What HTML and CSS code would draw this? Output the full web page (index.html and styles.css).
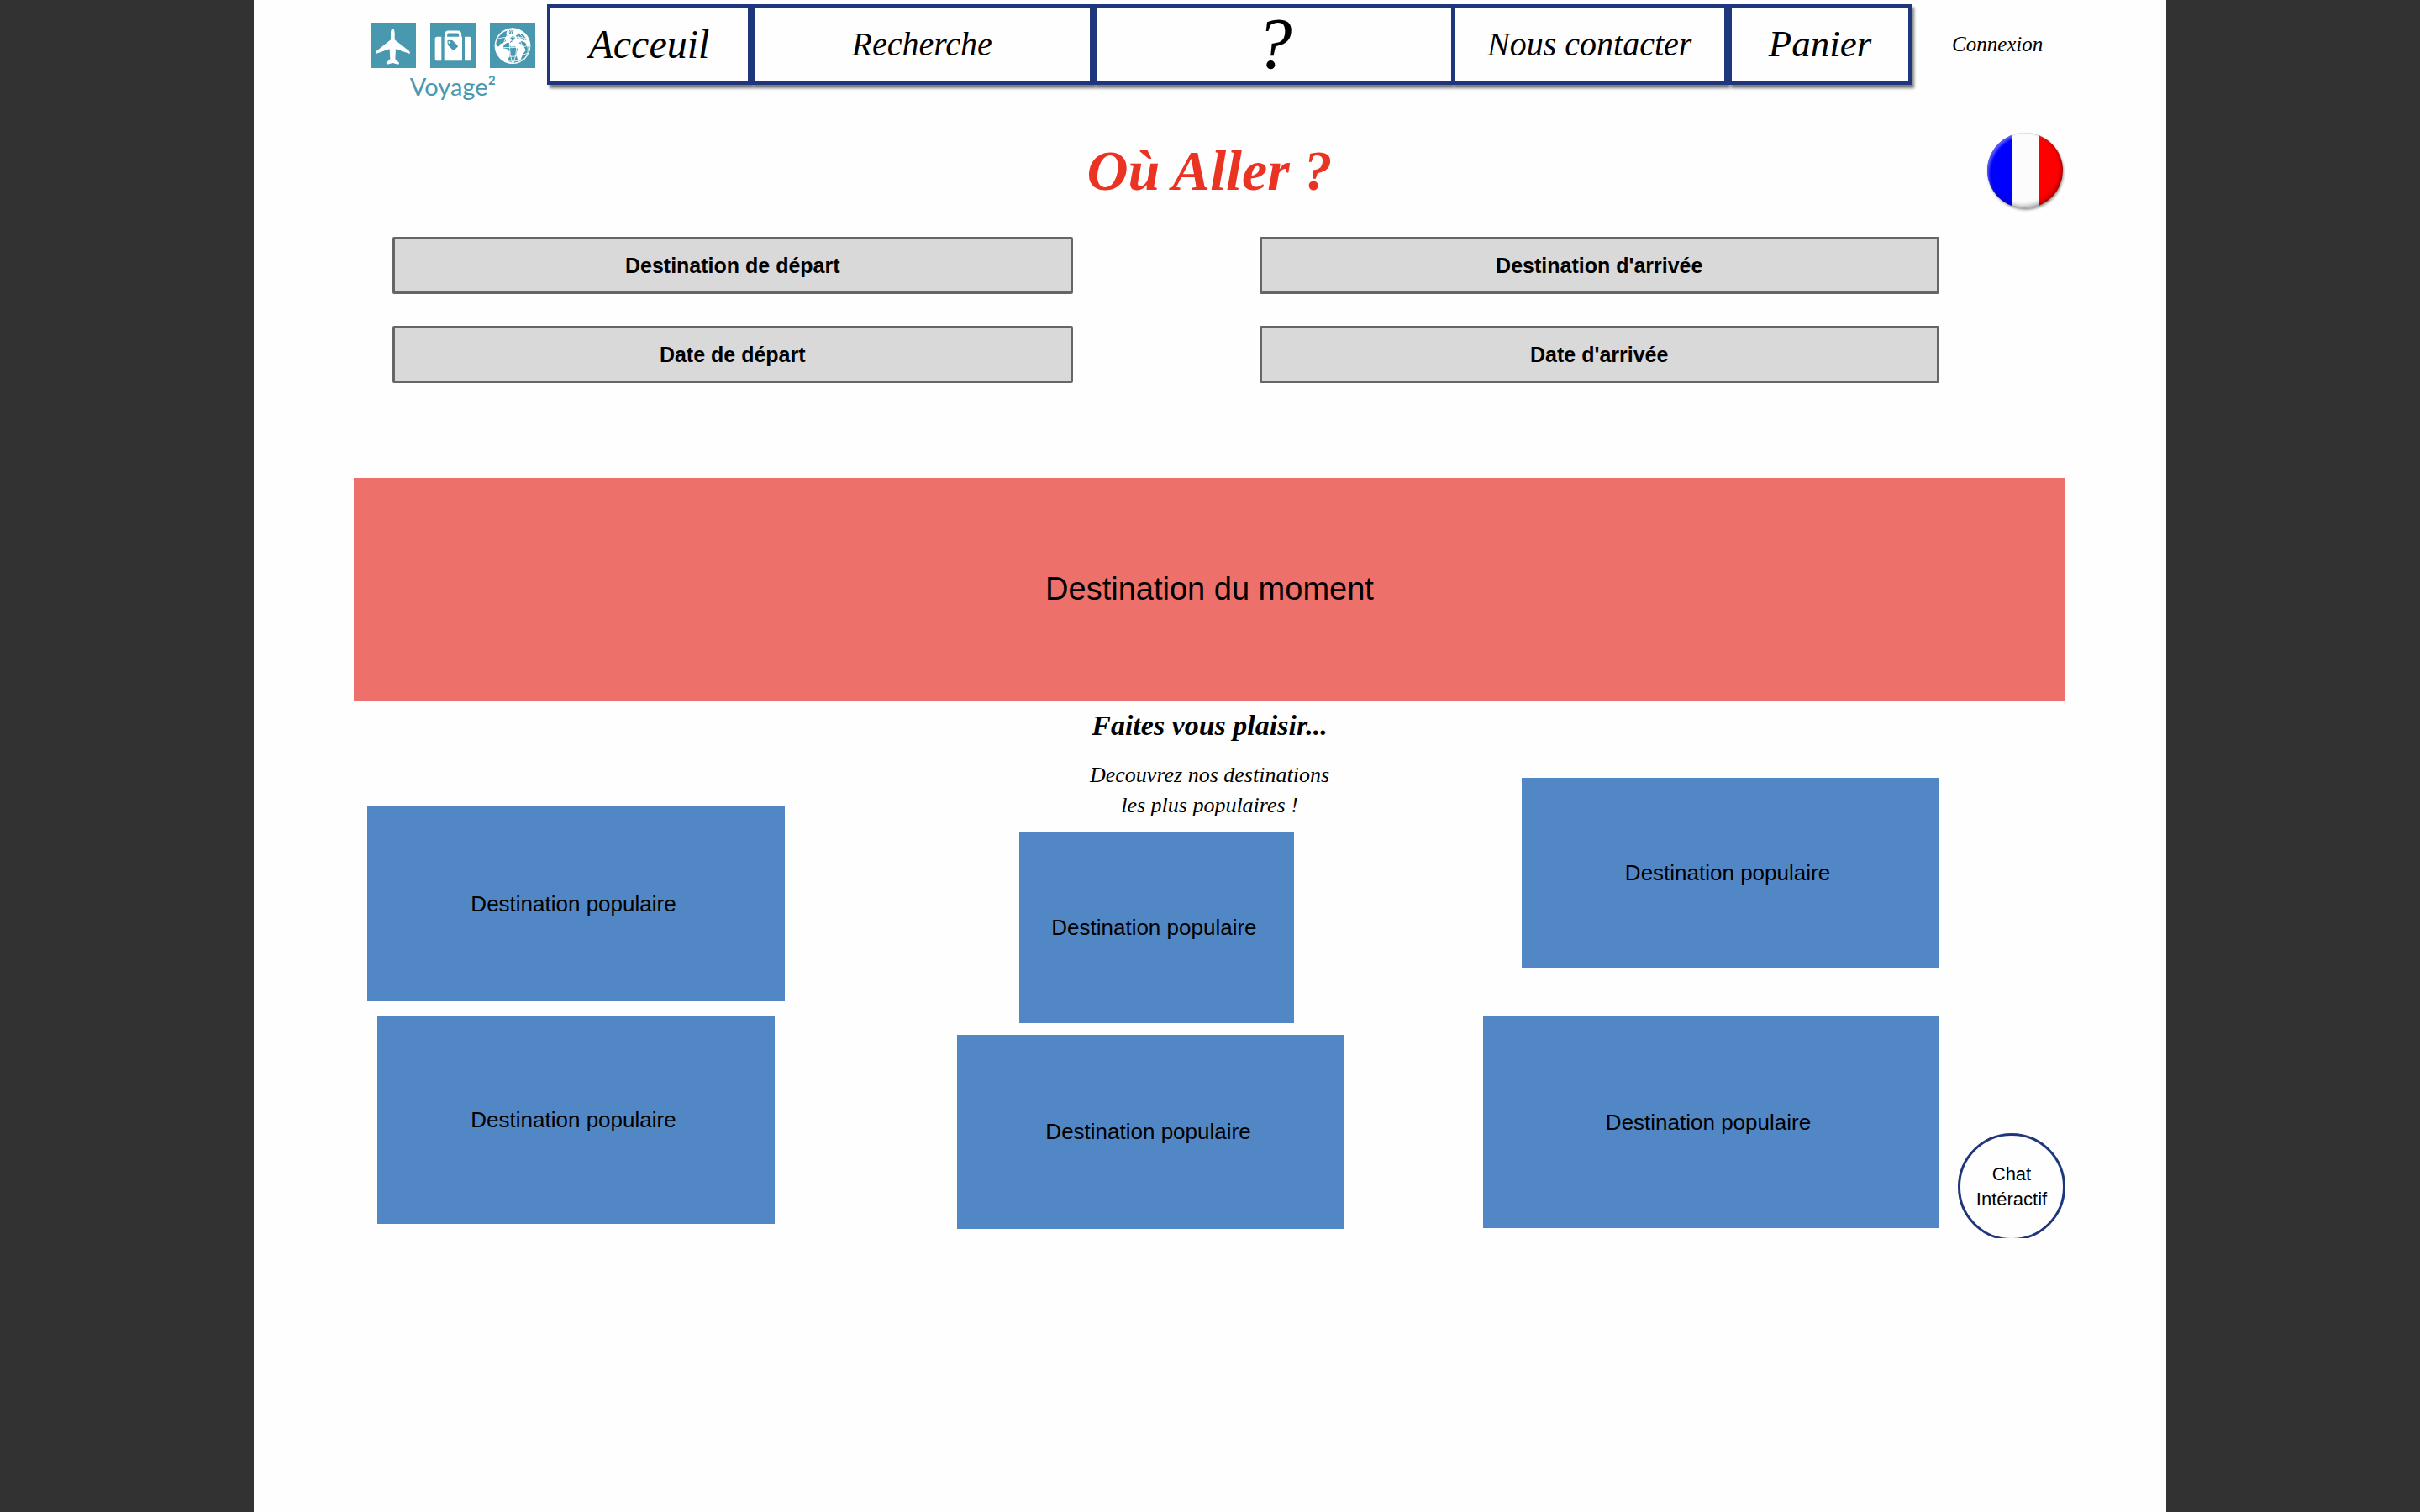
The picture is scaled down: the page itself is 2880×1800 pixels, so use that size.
FILE: index.html
```html
<!DOCTYPE html>
<html lang="fr">
<head>
  <meta charset="utf-8">
  <meta name="viewport" content="width=device-width, initial-scale=1">
  <title>Voyage²</title>
  <link rel="stylesheet" href="styles.css">
</head>
<body>
  <div class="page">
    <header class="header">
      <a class="logo" href="#">
        <span class="logo-icons">
          <svg class="logo-icon" viewBox="0 0 162 162" aria-hidden="true">
            <rect width="162" height="162" fill="#4899af"/>
            <path fill="#fff" d="M79 22c5 0 7 8 7 16v23l50 39c4 3 5 6 4 11L90 94l-2 36 12 11c3 3 2 7-1 8l-20-5-20 5c-3-1-4-5-1-8l12-11-2-36-49 17c-1-5 0-8 4-11l49-39V38c0-8 2-16 7-16z"/>
          </svg>
          <svg class="logo-icon" viewBox="0 0 162 162" aria-hidden="true">
            <rect width="162" height="162" fill="#4899af"/>
            <path fill="none" stroke="#fff" stroke-width="9" d="M56 52V42q0-9 9-9h33q9 0 9 9v10"/>
            <path fill="#fff" d="M25 50h15v86H25q-8 0-8-8V58q0-8 8-8zM50 50h64v86H50zM123 50h15q9 0 9 8v70q0 8-9 8h-15z"/>
            <path fill="#4899af" fill-rule="evenodd" d="M61 67q0-5 5-5l13 1 19 19q2 2 0 4L85 98q-2 2-4 0L63 80zm7-1a4 4 0 1 0 1 8 4 4 0 0 0-1-8z"/>
          </svg>
          <svg class="logo-icon" viewBox="0 0 162 162" aria-hidden="true">
            <rect width="162" height="162" fill="#4899af"/>
            <circle cx="81" cy="83" r="64" fill="#fff"/>
            <path fill="#4899af" d="M39 42l12-10 11-3-4 10 4 9-9 6 4 12-9 7-10 2-5 9-8 4-3-15q3-19 17-31zM69 27l17-2-3 13-9 5-6-5zM70 53l11-5 10 3-5 10-12 5-6 12 8 8 14-1 9 9-5 19 6 22 10-3 7-19 11-15-9-17-15-8 8-8 14 6 10 15 6-6q1 20-9 34-16 26-47 29-15 0-24-7l8-15 2-16-11-11-14-3 3-12 11-7 13-1 7-5z"/>
            <path fill="#4899af" d="M101 36l19 8 12 16-9 4-13-9-12 1-5-9z"/>
            <g fill="none" stroke="#fff" stroke-width="2.5">
              <path d="M81 19q-22 60 0 128M81 19q-54 58-28 122M81 19q28 62 2 128M81 19q56 60 22 124M81 19q84 62 40 114"/>
              <path d="M22 58q60-14 118 0M17 85q64 10 128-4M24 112q60 20 116-5M43 133q40 12 78-3"/>
            </g>
          </svg>
        </span>
        <span class="logo-name">Voyage²</span>
      </a>
      <nav class="nav" aria-label="Navigation principale">
        <a class="nav-link nav-home" href="#">Acceuil</a>
        <a class="nav-link nav-search" href="#">Recherche</a>
        <a class="nav-link nav-help" href="#">?</a>
        <a class="nav-link nav-contact" href="#">Nous contacter</a>
        <a class="nav-link nav-cart" href="#">Panier</a>
      </nav>
      <a class="login" href="#">Connexion</a>
    </header>

    <main>
      <div class="title-row">
        <h1 class="title">Où Aller ?</h1>
        <button class="flag" type="button" aria-label="Français"></button>
      </div>

      <form class="search">
        <input class="field" type="text" placeholder="Destination de départ" aria-label="Destination de départ">
        <input class="field" type="text" placeholder="Destination d'arrivée" aria-label="Destination d'arrivée">
        <input class="field" type="text" placeholder="Date de départ" aria-label="Date de départ">
        <input class="field" type="text" placeholder="Date d'arrivée" aria-label="Date d'arrivée">
      </form>

      <a class="banner" href="#">Destination du moment</a>

      <section class="popular">
        <div class="intro">
          <h2 class="intro-title">Faites vous plaisir...</h2>
          <p class="intro-text">Decouvrez nos destinations<br>les plus populaires !</p>
        </div>
        <div class="column column-left">
          <a class="tile tile-a" href="#">Destination populaire</a>
          <a class="tile tile-b" href="#">Destination populaire</a>
        </div>
        <div class="column column-middle">
          <a class="tile tile-c" href="#">Destination populaire</a>
          <a class="tile tile-d" href="#">Destination populaire</a>
        </div>
        <div class="column column-right">
          <a class="tile tile-e" href="#">Destination populaire</a>
          <a class="tile tile-f" href="#">Destination populaire</a>
        </div>
        <div class="chat-slot">
          <button class="chat" type="button">Chat<br>Intéractif</button>
        </div>
      </section>
    </main>
  </div>
</body>
</html>
```

FILE: styles.css
```css
:root {
  --navy: #1f367d;
  --teal: #4899af;
  --blue: #5287c6;
  --coral: #ee706a;
  --script: "Apple Chancery", "Liberation Serif", serif;
  --sans: "Liberation Sans", Arial, sans-serif;
}

*,
*::before,
*::after {
  box-sizing: border-box;
}

body {
  margin: 0;
  background: #323232;
  color: #000;
  font-family: var(--sans);
}

a {
  color: inherit;
  text-decoration: none;
}

.page {
  max-width: 2276px;
  min-height: 100vh;
  margin: 0 auto;
  padding: 5px 120px 0 119px;
  background: #fefefe;
}

/* Header */

.header {
  display: flex;
  align-items: flex-start;
}

.logo {
  display: flex;
  flex-direction: column;
  align-items: center;
  flex: none;
  margin-left: 20px;
  padding-top: 22px;
  color: var(--teal);
}

.logo-icons {
  display: flex;
  gap: 17px;
}

.logo-icon {
  display: block;
  width: 54px;
  height: 54px;
}

.logo-name {
  font-family: Lato, sans-serif;
  font-size: 29px;
  line-height: 44px;
}

.nav {
  display: grid;
  grid-template-columns: 243fr 407fr 427fr 329fr 219fr;
  flex: 1;
  margin-left: 14px;
  font-family: var(--script);
  font-style: italic;
}

.nav-link {
  display: flex;
  align-items: center;
  justify-content: center;
  height: 96px;
  padding-bottom: 2px;
  border: 4px solid var(--navy);
  background: #fefefe;
  box-shadow: 3px 4px 3px rgba(0, 0, 0, 0.5);
}

.nav-home {
  font-size: 48px;
}

.nav-search,
.nav-contact {
  font-size: 40px;
}

.nav-help {
  border-right: 0;
  font-size: 86px;
  line-height: 80px;
}

.nav-cart {
  margin-left: 1px;
  font-size: 45px;
}

.login {
  flex: none;
  width: 183px;
  padding-left: 48px;
  font-family: var(--script);
  font-size: 25px;
  font-style: italic;
  line-height: 96px;
}

/* Title */

.title-row {
  display: grid;
  grid-template-columns: 1fr auto 1fr;
  align-items: center;
  margin-top: 33px;
}

.title {
  grid-column: 2;
  margin: 0;
  color: #ea3323;
  font-family: var(--script);
  font-size: 68px;
  font-style: italic;
  line-height: 80px;
}

.flag {
  justify-self: end;
  width: 90px;
  height: 90px;
  margin-right: 3px;
  padding: 0;
  border: 0;
  border-radius: 50%;
  background: linear-gradient(90deg, #00f 0 29px, #fcfcfc 29px 61px, #f00 61px);
  box-shadow:
    inset 4px 4px 3px -2px rgba(255, 255, 255, 0.35),
    inset -2px -3px 5px rgba(0, 0, 0, 0.3),
    inset 0 0 2px rgba(0, 0, 0, 0.4),
    1px 2px 3px rgba(0, 0, 0, 0.4);
}

/* Search form */

.search {
  display: grid;
  grid-template-columns: 1fr 1fr;
  gap: 38px 222px;
  margin: 34px 150px 0 46px;
}

.field {
  width: 100%;
  height: 68px;
  padding: 0;
  border: 3px solid #666;
  border-radius: 2px;
  background: #d9d9d9;
  font-family: var(--sans);
  font-size: 25px;
  font-weight: bold;
  text-align: center;
}

.field::placeholder {
  color: #000;
  opacity: 1;
}

.banner {
  display: flex;
  align-items: center;
  justify-content: center;
  min-height: 265px;
  margin-top: 113px;
  background: var(--coral);
  font-size: 38px;
}

/* Popular destinations */

.popular {
  display: grid;
  grid-template-columns: 16fr 497fr 205fr 461fr 165fr 542fr 23fr 128fr;
  grid-template-rows: auto 1fr;
}

.intro {
  grid-area: 1 / 1 / 2 / -1;
  padding: 10px 0 13px;
  font-family: var(--script);
  font-style: italic;
  text-align: center;
}

.intro-title {
  margin: 0 0 21px;
  font-size: 34px;
  line-height: 40px;
}

.intro-text {
  margin: 0;
  font-size: 26px;
  line-height: 36px;
}

.column {
  display: flex;
  flex-direction: column;
}

.column-left {
  grid-area: 1 / 2 / 3 / 3;
  align-items: center;
  gap: 18px;
  padding-top: 126px;
}

.column-middle {
  grid-area: 2 / 4 / 3 / 5;
  gap: 14px;
}

.column-right {
  grid-area: 1 / 6 / 3 / 7;
  align-items: flex-end;
  gap: 58px;
  padding-top: 92px;
}

.tile {
  display: flex;
  align-items: center;
  justify-content: center;
  width: 100%;
  padding-right: 6px;
  background: var(--blue);
  font-size: 26px;
}

.tile-a {
  min-height: 232px;
}

.tile-b {
  width: 95%;
  min-height: 247px;
}

.tile-c {
  width: 71%;
  min-height: 228px;
  margin-left: 16%;
}

.tile-d {
  min-height: 231px;
}

.tile-e {
  width: 92%;
  max-width: 496px;
  min-height: 226px;
}

.tile-f {
  min-height: 252px;
}

/* The chat bubble is cut off by the bottom of its slot */
.chat-slot {
  grid-area: 1 / 8 / 3 / 9;
  height: 125px;
  margin-top: 515px;
  overflow: hidden;
}

.chat {
  width: 100%;
  height: 128px;
  padding: 0;
  border: 3px solid var(--navy);
  border-radius: 50%;
  background: none;
  color: #000;
  font-family: var(--sans);
  font-size: 22px;
  line-height: 30px;
}
```
